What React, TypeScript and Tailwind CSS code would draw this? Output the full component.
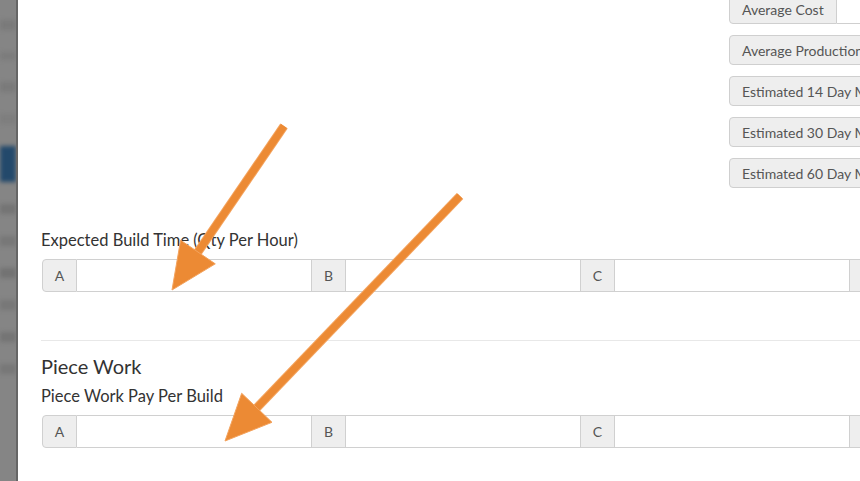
import React from "react";

const font = { fontFamily: "Lato, 'Open Sans', sans-serif" };

const stats = [
  { label: "Average Cost", withInput: true },
  { label: "Average Production Time" },
  { label: "Estimated 14 Day Materials" },
  { label: "Estimated 30 Day Materials" },
  { label: "Estimated 60 Day Materials" },
];

function StatRow({ label, withInput }: { label: string; withInput?: boolean }) {
  return (
    <div className="flex h-[30px] shrink-0">
      <div className="flex shrink-0 items-center whitespace-nowrap rounded-l-[4px] border border-[#cfcfcf] bg-[#eeeeee] px-3 text-[14px] text-[#555]">
        {label}
      </div>
      {withInput && <div className="w-[60px] shrink-0 border-y border-[#cfcfcf] bg-white" />}
    </div>
  );
}

function InputGroup() {
  return (
    <div className="flex h-[33px] w-max">
      {["A", "B", "C", "D"].map((l, i) => (
        <div key={l} className="flex shrink-0">
          <div
            className={`flex w-[35px] items-center justify-center border border-[#d0d0d0] bg-[#eeeeee] text-[14px] text-[#555] ${
              i === 0 ? "rounded-l-[4px]" : ""
            }`}
          >
            {l}
          </div>
          <div className="w-[234px] border-y border-[#d0d0d0] bg-white" />
        </div>
      ))}
    </div>
  );
}

function Arrow({ x1, y1, x2, y2 }: { x1: number; y1: number; x2: number; y2: number }) {
  const dx = x2 - x1;
  const dy = y2 - y1;
  const len = Math.hypot(dx, dy);
  const ux = dx / len;
  const uy = dy / len;
  const head = 46;
  const half = 21;
  const bx = x2 - ux * head;
  const by = y2 - uy * head;
  const px = -uy;
  const py = ux;
  const pts = `${x2},${y2} ${bx + px * half},${by + py * half} ${bx - px * half},${by - py * half}`;
  return (
    <g>
      <line x1={x1} y1={y1} x2={bx + ux * 4} y2={by + uy * 4} stroke="#f3a35e" strokeWidth={9} />
      <line x1={x1} y1={y1} x2={bx + ux * 4} y2={by + uy * 4} stroke="#ec8a34" strokeWidth={7} />
      <polygon points={pts} fill="#ec8a34" stroke="#f3a35e" strokeWidth={1} strokeLinejoin="round" />
    </g>
  );
}

export default function App() {
  return (
    <div className="relative flex h-[481px] w-[860px] overflow-hidden bg-white" style={font}>
      {/* dimmed sidebar behind the modal */}
      <div className="relative w-[18px] shrink-0 overflow-hidden border-r-2 border-[#666] bg-[#858585]">
        <div className="flex flex-col gap-[22px] pt-[20px] blur-[2px]">
          <div className="h-[10px] bg-[#7a7a7a]" />
          <div className="h-[8px] bg-[#7c7c7c]" />
          <div className="h-[10px] bg-[#7a7a7a]" />
          <div className="h-[10px] bg-[#7e7e7e]" />
          <div className="h-[36px] bg-[#23496b]" />
          <div className="h-[10px] bg-[#747474]" />
          <div className="h-[10px] bg-[#777]" />
          <div className="h-[10px] bg-[#727272]" />
          <div className="h-[10px] bg-[#777]" />
          <div className="h-[10px] bg-[#747474]" />
          <div className="h-[10px] bg-[#777]" />
        </div>
      </div>

      <div className="min-w-0 flex-1 pl-[23px]">
        <div className="mt-[-6px] flex flex-col gap-[11px] pl-[688px]">
          {stats.map((s) => (
            <StatRow key={s.label} label={s.label} withInput={s.withInput} />
          ))}
        </div>

        <div className="mt-[42px] h-[20px] whitespace-nowrap text-[16.5px] leading-[20px] text-[#333]">
          Expected Build Time (Qty Per Hour)
        </div>
        <div className="mt-[9px] pl-px">
          <InputGroup />
        </div>

        <div className="mt-[48px] h-px bg-[#e8e8e8]" />

        <div className="mt-[13px] h-[24px] text-[20px] leading-[24px] text-[#333]">Piece Work</div>
        <div className="mt-[8px] h-[20px] whitespace-nowrap text-[16.5px] leading-[20px] text-[#333]">
          Piece Work Pay Per Build
        </div>
        <div className="mt-[9px] pl-px">
          <InputGroup />
        </div>
      </div>

      {/* annotation arrows */}
      <svg className="pointer-events-none absolute left-0 top-0" width={860} height={481}>
        <Arrow x1={284} y1={126} x2={172} y2={290} />
        <Arrow x1={460} y1={196} x2={225} y2={441} />
      </svg>
    </div>
  );
}
